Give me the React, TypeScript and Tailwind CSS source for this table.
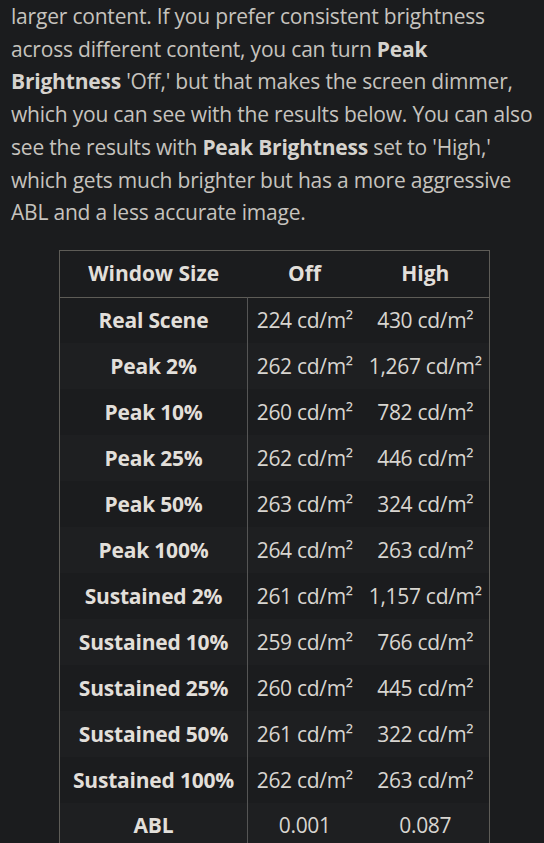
import React from 'react';

const rows: [string, string, string][] = [
  ['Real Scene', '224 cd/m²', '430 cd/m²'],
  ['Peak 2%', '262 cd/m²', '1,267 cd/m²'],
  ['Peak 10%', '260 cd/m²', '782 cd/m²'],
  ['Peak 25%', '262 cd/m²', '446 cd/m²'],
  ['Peak 50%', '263 cd/m²', '324 cd/m²'],
  ['Peak 100%', '264 cd/m²', '263 cd/m²'],
  ['Sustained 2%', '261 cd/m²', '1,157 cd/m²'],
  ['Sustained 10%', '259 cd/m²', '766 cd/m²'],
  ['Sustained 25%', '260 cd/m²', '445 cd/m²'],
  ['Sustained 50%', '261 cd/m²', '322 cd/m²'],
  ['Sustained 100%', '262 cd/m²', '263 cd/m²'],
  ['ABL', '0.001', '0.087'],
];

export default function App() {
  return (
    <div className="min-h-[843px] bg-[#1b1c1e] px-[11px] font-['Open_Sans',sans-serif] text-[#c6c3be] overflow-hidden">
      <p className="text-[21px] leading-[32.7px] tracking-[-0.2px]">
        larger content. If you prefer consistent brightness across different content, you can turn{' '}
        <b className="font-bold text-[#d6d3ce]">Peak Brightness</b> 'Off,' but that makes the screen dimmer, which you
        can see with the results below. You can also see the results with{' '}
        <b className="font-bold text-[#d6d3ce]">Peak Brightness</b> set to 'High,' which gets much brighter but has a
        more aggressive ABL and a less accurate image.
      </p>

      <table className="mt-[21px] ml-[48px] w-[430px] border border-[#5e5c57] border-collapse text-[21px] table-fixed">
        <colgroup>
          <col className="w-[188px]" />
          <col className="w-[114px]" />
          <col className="w-[128px]" />
        </colgroup>
        <thead>
          <tr className="h-[47px] border-b border-[#5e5c57] text-[#e2dfda]">
            <th className="font-bold">Window Size</th>
            <th className="font-bold">Off</th>
            <th className="font-bold">High</th>
          </tr>
        </thead>
        <tbody>
          {rows.map(([label, off, high], i) => (
            <tr key={label} className={`h-[46px] ${i % 2 === 1 ? 'bg-[#1e1f21]' : 'bg-[#1b1c1e]'}`}>
              <td className="text-center font-bold text-[#e2dfda] border-r border-[#555555] whitespace-nowrap tracking-[-0.2px]">
                {label}
              </td>
              <td className="text-center text-[#d8d5d0] whitespace-nowrap tracking-[-0.3px]">{off}</td>
              <td className="text-center text-[#d8d5d0] whitespace-nowrap tracking-[-0.3px]">{high}</td>
            </tr>
          ))}
        </tbody>
      </table>
    </div>
  );
}
